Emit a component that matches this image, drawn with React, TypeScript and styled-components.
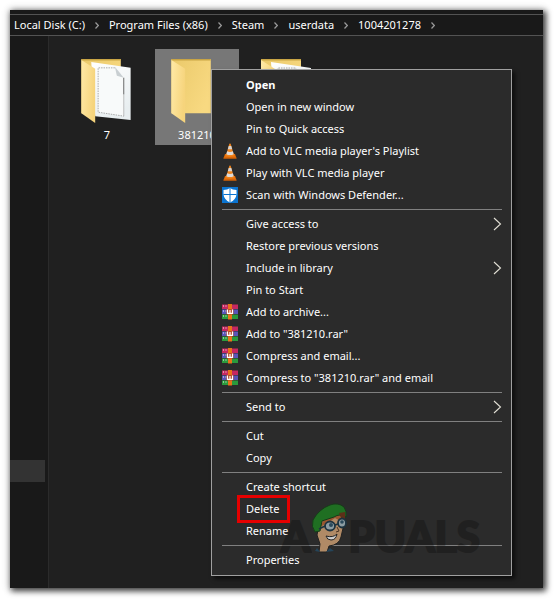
import React from "react";
import styled, { createGlobalStyle, css } from "styled-components";

const GlobalStyle = createGlobalStyle`
  * { box-sizing: border-box; }
  body { margin: 0; background: #fff; font-family: "Noto Sans", "Open Sans", sans-serif; font-size: 11px; color: #fff; }
  button { font: inherit; color: inherit; background: none; border: 0; margin: 0; padding: 0; cursor: default; }
  ul, ol { list-style: none; margin: 0; padding: 0; }
`;

const Page = styled.div`
  display: flex;
  min-height: 100vh;
  padding: 10px 11px 11px 10px;
`;

const Explorer = styled.main`
  position: relative;
  flex: 1;
  display: flex;
  flex-direction: column;
  background: #202020;
  box-shadow: 2px 2px 6px 1px rgba(0, 0, 0, 0.75), 0 0 8px 1px rgba(0, 0, 0, 0.15);
`;

const AddressBar = styled.nav`
  padding-top: 4px;
  background: #191919;
`;

const Crumbs = styled.ol`
  display: flex;
  align-items: center;
  gap: 10px;
  height: 22px;
  padding-left: 4px;
  border-top: 1px solid #535353;
  border-bottom: 1px solid #535353;
  white-space: nowrap;
`;

const Crumb = styled.li`
  display: flex;
  align-items: center;
  gap: 10px;
`;

const CrumbLink = styled.a`
  color: #fff;
  text-decoration: none;
  line-height: 20px;
`;

const Body = styled.div`
  flex: 1;
  display: flex;
`;

const Sidebar = styled.aside`
  display: flex;
  flex-direction: column;
  width: 38px;
  padding: 424px 3px 0 0;
  background: #191919;
`;

const SidebarSelection = styled.div`
  height: 22px;
  background: #333;
`;

const Files = styled.section`
  flex: 1;
  display: flex;
  align-items: flex-start;
  gap: 6px;
  padding: 13px 0 0 16px;
  border-left: 1px solid #2b2b2b;
`;

const Tile = styled.button<{ $selected?: boolean }>`
  display: flex;
  flex-direction: column;
  align-items: center;
  width: 84px;
  height: 96px;
  padding-top: 8px;
  background: ${(p) => (p.$selected ? "#777" : "transparent")};
`;

const TileLabel = styled.span`
  line-height: 20px;
`;

const Menu = styled.ul`
  position: absolute;
  top: 59px;
  left: 201px;
  width: 301px;
  padding: 4px 9px 4px 10px;
  background: #2b2b2b;
  border: 1px solid #a0a0a0;
  box-shadow: 3px 3px 4px rgba(0, 0, 0, 0.6);
`;

const MenuItem = styled.button<{ $bold?: boolean }>`
  display: flex;
  align-items: center;
  width: 100%;
  height: 22px;
  line-height: 22px;
  text-align: left;
  white-space: nowrap;
  font-weight: ${(p) => (p.$bold ? 700 : 400)};
`;

const IconSlot = styled.span`
  display: flex;
  flex: none;
  width: 24px;
`;

const ItemText = styled.span<{ $marked?: boolean }>`
  flex: 1;
  ${(p) =>
    p.$marked &&
    css`
      flex: none;
      margin-left: -6px;
      width: 47px;
      padding-left: 6px;
      outline: 3px solid #e60000;
    `}
`;

const Separator = styled.li`
  height: 7px;
  padding-top: 3px;
  &::before {
    content: "";
    display: block;
    height: 1px;
    background: #808080;
  }
`;

const Watermark = styled.div`
  position: absolute;
  left: 271px;
  top: 493px;
  display: flex;
  align-items: flex-end;
  gap: 1px;
  font: 900 42px/34px Lato, sans-serif;
  pointer-events: none;
`;

const WatermarkText = styled.span`
  color: #000;
  -webkit-text-stroke: 2px #000;
  opacity: 0.25;
`;

const CrumbArrow = () => (
  <svg width="4" height="7" viewBox="0 0 4 7" fill="none" stroke="#999" strokeWidth="1.2" aria-hidden="true">
    <path d="M.5 .5 3.3 3.5 .5 6.5" />
  </svg>
);

const SubmenuArrow = () => (
  <svg width="9" height="14" viewBox="0 0 9 14" fill="none" stroke="#e2dfd5" strokeWidth="1.1" aria-hidden="true">
    <path d="M1 1 7.500 7 1 13" />
  </svg>
);

const FolderIcon = ({ papers }: { papers?: boolean }) => (
  <svg width="52" height="69" viewBox="0 0 52 69" aria-hidden="true">
    <defs>
      <linearGradient id="back" x1="0" x2="1" y2="0.6">
        <stop offset="0" stopColor="#eac96a" />
        <stop offset="1" stopColor="#f8d981" />
      </linearGradient>
      <linearGradient id="flap" x1="0" x2="1" y2="0.3">
        <stop offset="0" stopColor="#ffe9a6" />
        <stop offset="1" stopColor="#f6d47c" />
      </linearGradient>
      <linearGradient id="paper" x2="0.4" y2="1">
        <stop offset="0" stopColor="#fff" />
        <stop offset="1" stopColor="#e8eef0" />
      </linearGradient>
    </defs>
    <path d="M0 2H40V57H0Z" fill="url(#back)" />
    <path d="M0 2H40V3.500H0Z" fill="#c9a545" />
    {papers && (
      <g>
        <path d="M10 5 50 11V64L14 60Z" fill="url(#paper)" />
        <path d="M17 10 34 11 43 21V60L17 56Z" fill="#f8fafa" />
        <path d="M34 11H17V56L43 60" fill="none" stroke="#888" strokeWidth=".7" strokeDasharray="1.500 1" />
        <path d="M43 21V38" stroke="#444" strokeWidth=".8" />
        <path d="M43 38V60" stroke="#999" strokeWidth=".6" />
        <path d="M34 10 43 21 36 19Z" fill="#c9cfd2" />
      </g>
    )}
    <path d="M0 3 14 12V67L0 57Z" fill="url(#flap)" />
  </svg>
);

const VlcIcon = () => (
  <svg width="16" height="16" viewBox="0 0 16 16" aria-hidden="true">
    <path d="M3 11H13L14.500 15.500H1.500Z" fill="#e8720c" />
    <path d="M7.300 .8Q8 .2 8.700 .8L12 12.500Q8 14.500 4 12.500Z" fill="#f0841c" />
    <path d="M6.700 3H9.300L10.200 6.200H5.800Z" fill="#d6d3d0" />
    <path d="M5.100 8.300Q8 9.500 10.900 8.300L11.700 11.200Q8 13 4.300 11.200Z" fill="#dedbd8" />
    <path d="M1.500 15H14.500" stroke="#c75a05" />
  </svg>
);

const DefenderIcon = () => (
  <svg width="16" height="16" viewBox="0 0 16 16" aria-hidden="true">
    <path d="M0 0H16V16H0Z" fill="#0b74d0" />
    <path d="M8 1Q10.500 3 14.500 3V7.500Q14 12.500 8 15.500 2 12.500 1.500 7.500V3Q5.500 3 8 1Z" fill="#fff" />
    <path d="M8 1V15.500M1.500 7.500H14.500" stroke="#0b74d0" strokeWidth="1" />
  </svg>
);

const RarIcon = () => (
  <svg width="16" height="16" viewBox="0 0 16 16" aria-hidden="true">
    <path d="M0 .5H16V5H0Z" fill="#c62860" />
    <path d="M0 5.500H16V10H0Z" fill="#5a54b8" />
    <path d="M0 10.500H16V15H0Z" fill="#2a9a3c" />
    <path d="M1.500 1V15M4 1V15" stroke="#fff" strokeOpacity=".6" strokeWidth=".8" strokeDasharray="2 3" />
    <path d="M6 0H10V15.500H6Z" fill="#e8731a" />
    <path d="M4.500 5H11.500V10.500H4.500Z" fill="#b5482a" />
    <path d="M5.500 5.500V9.300H10.500V5.500M8 6V9.300" fill="none" stroke="#fff" strokeWidth="1.200" />
  </svg>
);

const Mascot = () => (
  <svg width="36" height="50" viewBox="0 0 36 50" aria-hidden="true">
    <path d="M7 27 9 18 29 11 33 21 30 34Q28 42 18 43L16 49H8L9 41 6 32Z" fill="#b08a66" stroke="#222" />
    <path d="M9 24 12 18 29 11 31 19 24 15 18 19Z" fill="#99562f" />
    <path d="M4 29Q0 24 2 17 8 6 19 2 27 -1 33 4 36 8 35 14 29 10 23 14L11 18 9 28Z" fill="#1f6f22" stroke="#173b19" />
    <path d="M28 10 34 9 34 19 31 17Z" fill="#5c3018" />
    <path d="M8 26 14 23M24 22 27 21" stroke="#1d3340" strokeWidth="1.500" />
    <ellipse cx="19" cy="23" rx="5" ry="4.500" fill="#8d9da3" stroke="#1d3340" strokeWidth="1.800" />
    <ellipse cx="31" cy="20" rx="4" ry="4.500" fill="#8d9da3" stroke="#1d3340" strokeWidth="1.800" />
    <circle cx="20" cy="22" r="2" fill="#2b4a5c" />
    <circle cx="31" cy="19" r="1.800" fill="#2b4a5c" />
    <path d="M26 24 28 28 25 29" fill="none" stroke="#4a3322" />
    <path d="M15 33Q22 35 26 31 25 37 20 37 16 37 15 33Z" fill="#ccc" stroke="#222" />
    <path d="M4 48 6 45 9 49ZM15 49 19 45 23 48Z" fill="#25455a" />
  </svg>
);

const crumbs = ["Local Disk (C:)", "Program Files (x86)", "Steam", "userdata", "1004201278"];

const folders = [
  { name: "7", papers: true },
  { name: "381210", selected: true },
  { name: "", papers: true },
];

type Entry = { text: string; icon?: React.ReactNode; bold?: boolean; submenu?: boolean; marked?: boolean };

const groups: Entry[][] = [
  [
    { text: "Open", bold: true },
    { text: "Open in new window" },
    { text: "Pin to Quick access" },
    { text: "Add to VLC media player's Playlist", icon: <VlcIcon /> },
    { text: "Play with VLC media player", icon: <VlcIcon /> },
    { text: "Scan with Windows Defender...", icon: <DefenderIcon /> },
  ],
  [
    { text: "Give access to", submenu: true },
    { text: "Restore previous versions" },
    { text: "Include in library", submenu: true },
    { text: "Pin to Start" },
    { text: "Add to archive...", icon: <RarIcon /> },
    { text: 'Add to "381210.rar"', icon: <RarIcon /> },
    { text: "Compress and email...", icon: <RarIcon /> },
    { text: 'Compress to "381210.rar" and email', icon: <RarIcon /> },
  ],
  [{ text: "Send to", submenu: true }],
  [{ text: "Cut" }, { text: "Copy" }],
  [{ text: "Create shortcut" }, { text: "Delete", marked: true }, { text: "Rename" }],
  [{ text: "Properties" }],
];

export default function App() {
  return (
    <Page>
      <GlobalStyle />
      <Explorer>
        <AddressBar aria-label="Path">
          <Crumbs>
            {crumbs.map((c) => (
              <Crumb key={c}>
                <CrumbLink href="#">{c}</CrumbLink>
                <CrumbArrow />
              </Crumb>
            ))}
          </Crumbs>
        </AddressBar>
        <Body>
          <Sidebar>
            <SidebarSelection />
          </Sidebar>
          <Files>
            {folders.map((f) => (
              <Tile key={f.name} $selected={f.selected} aria-label={f.name || "Folder"}>
                <FolderIcon papers={f.papers} />
                <TileLabel>{f.name}</TileLabel>
              </Tile>
            ))}
          </Files>
        </Body>
        <Menu>
          {groups.map((group, i) => (
            <React.Fragment key={i}>
              {i > 0 && <Separator role="separator" />}
              {group.map((e) => (
                <li key={e.text}>
                  <MenuItem $bold={e.bold}>
                    <IconSlot>{e.icon}</IconSlot>
                    <ItemText $marked={e.marked}>{e.text}</ItemText>
                    {e.submenu && <SubmenuArrow />}
                  </MenuItem>
                </li>
              ))}
            </React.Fragment>
          ))}
        </Menu>
        <Watermark aria-hidden="true">
          <WatermarkText>A</WatermarkText>
          <Mascot />
          <WatermarkText>PUALS</WatermarkText>
        </Watermark>
      </Explorer>
    </Page>
  );
}
